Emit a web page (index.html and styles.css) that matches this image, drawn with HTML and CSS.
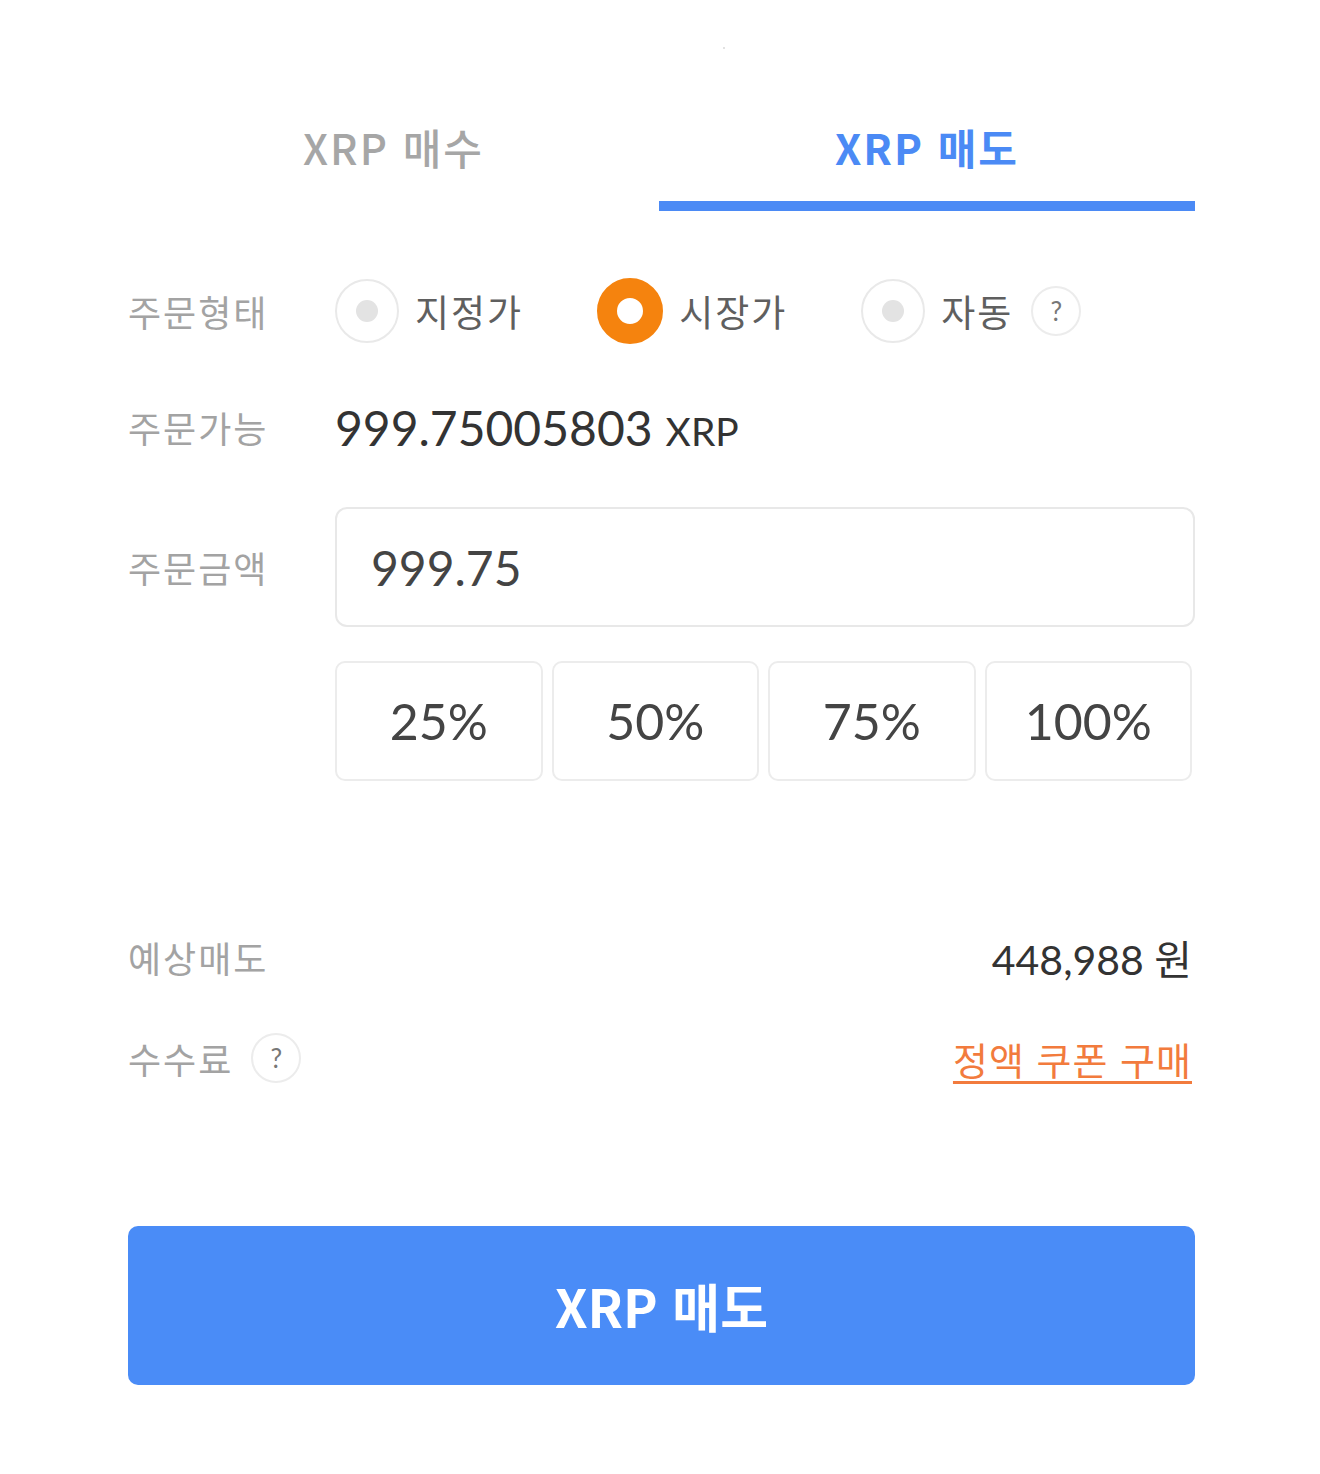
FILE: index.html
```html
<!DOCTYPE html>
<html lang="ko">
<head>
<meta charset="utf-8">
<title>XRP 매도</title>
<link rel="stylesheet" href="styles.css">
</head>
<body>
<div class="dot"></div>
<main class="panel">
  <nav class="tabs">
    <div class="tab">XRP 매수</div>
    <div class="tab active">XRP 매도</div>
  </nav>

  <div class="row row-type">
    <div class="label">주문형태</div>
    <div class="radios">
      <div class="radio"><span class="circle"><span class="inner"></span></span><span class="rtext">지정가</span></div>
      <div class="radio checked"><span class="circle"><span class="inner"></span></span><span class="rtext">시장가</span></div>
      <div class="radio"><span class="circle"><span class="inner"></span></span><span class="rtext">자동</span><span class="help">?</span></div>
    </div>
  </div>

  <div class="row row-avail">
    <div class="label">주문가능</div>
    <div class="avail"><span class="num">999.75005803</span><span class="unit">XRP</span></div>
  </div>

  <div class="row row-amount">
    <div class="label">주문금액</div>
    <div class="input">999.75</div>
  </div>

  <div class="row row-pct">
    <div class="label"></div>
    <div class="pcts">
      <div class="pct">25%</div>
      <div class="pct">50%</div>
      <div class="pct">75%</div>
      <div class="pct">100%</div>
    </div>
  </div>

  <div class="line line-est">
    <div class="label">예상매도</div>
    <div class="est">448,988 원</div>
  </div>

  <div class="line line-fee">
    <div class="label fee-label">수수료<span class="help">?</span></div>
    <a class="coupon">정액 쿠폰 구매</a>
  </div>

  <button class="submit">XRP 매도</button>
</main>
</body>
</html>
```

FILE: styles.css
```css
html, body {
  margin: 0;
  padding: 0;
  background: #ffffff;
}
body {
  font-family: "Lato", "Noto Sans CJK KR", sans-serif;
  color: #333333;
  position: relative;
  height: 1474px;
  overflow: hidden;
}
.dot {
  position: absolute;
  left: 723px;
  top: 47px;
  width: 2px;
  height: 2px;
  background: #d8d8d8;
  border-radius: 50%;
}
.panel {
  width: 1067px;
  margin: 0 0 0 128px;
  padding-top: 119px;
}
.tabs {
  display: grid;
  grid-template-columns: 531px 1fr;
}
.tab {
  text-align: center;
  font-family: "Noto Sans CJK KR", sans-serif;
  font-size: 42px;
  letter-spacing: 2px;
  line-height: 56px;
  padding-bottom: 26px;
  border-bottom: 10px solid transparent;
  color: #a6a6a6;
  font-weight: 500;
}
.tab.active {
  color: #4b8af5;
  border-bottom-color: #4b8af5;
  font-weight: 700;
}
.row {
  display: flex;
  align-items: center;
}
.label {
  width: 207px;
  flex: none;
  font-family: "Noto Sans CJK KR", sans-serif;
  font-size: 36px;
  letter-spacing: 2px;
  color: #a3a3a3;
}
.row-type {
  margin-top: 68px;
  height: 64px;
}
.radios {
  display: flex;
  align-items: center;
  gap: 74px;
}
.radio {
  display: flex;
  align-items: center;
}
.circle {
  width: 60px;
  height: 60px;
  border: 2px solid #e9e9e9;
  border-radius: 50%;
  display: flex;
  align-items: center;
  justify-content: center;
}
.inner {
  width: 22px;
  height: 22px;
  border-radius: 50%;
  background: #e3e3e3;
}
.radio.checked .circle {
  width: 26px;
  height: 26px;
  border: 20px solid #f5830e;
}
.radio.checked .inner {
  background: #ffffff;
}
.rtext {
  margin-left: 16px;
  font-family: "Noto Sans CJK KR", sans-serif;
  font-size: 37px;
  letter-spacing: 2px;
  color: #5f5f5f;
}
.help {
  display: inline-flex;
  align-items: center;
  justify-content: center;
  width: 46px;
  height: 46px;
  border: 2px solid #ececec;
  border-radius: 50%;
  font-family: "Lato", sans-serif;
  font-size: 26px;
  letter-spacing: 0;
  color: #777777;
  margin-left: 18px;
}
.row-avail {
  margin-top: 52px;
  height: 64px;
}
.avail {
  display: flex;
  align-items: baseline;
}
.avail .num {
  font-size: 48px;
  color: #333333;
}
.avail .unit {
  font-size: 39px;
  color: #333333;
  margin-left: 13px;
}
.row-amount {
  margin-top: 48px;
}
.input {
  flex: 1;
  height: 116px;
  border: 2px solid #e8e8e8;
  border-radius: 12px;
  display: flex;
  align-items: center;
  padding-left: 34px;
  font-size: 48px;
  color: #444444;
}
.row-pct {
  margin-top: 34px;
}
.pcts {
  flex: 1;
  display: grid;
  grid-template-columns: repeat(4, 1fr);
  gap: 9px;
  margin-right: 3px;
}
.pct {
  height: 116px;
  border: 2px solid #ececec;
  border-radius: 10px;
  display: flex;
  align-items: center;
  justify-content: center;
  font-size: 50px;
  color: #444444;
}
.line {
  display: flex;
  align-items: center;
  justify-content: space-between;
  height: 50px;
  padding-right: 3px;
}
.line-est {
  margin-top: 151px;
}
.line-fee {
  margin-top: 51px;
}
.est {
  font-size: 41px;
  color: #333333;
}
.fee-label {
  display: flex;
  align-items: center;
  width: auto;
}
.coupon {
  font-family: "Noto Sans CJK KR", sans-serif;
  font-size: 38px;
  letter-spacing: 1px;
  color: #f27b3d;
  text-decoration: underline;
  text-underline-offset: 6px;
}
.submit {
  display: block;
  width: 100%;
  margin-top: 143px;
  height: 159px;
  border: none;
  border-radius: 10px;
  background: #4a8cf7;
  color: #ffffff;
  font-family: "Noto Sans CJK KR", sans-serif;
  font-size: 52px;
  font-weight: 700;
}
```
